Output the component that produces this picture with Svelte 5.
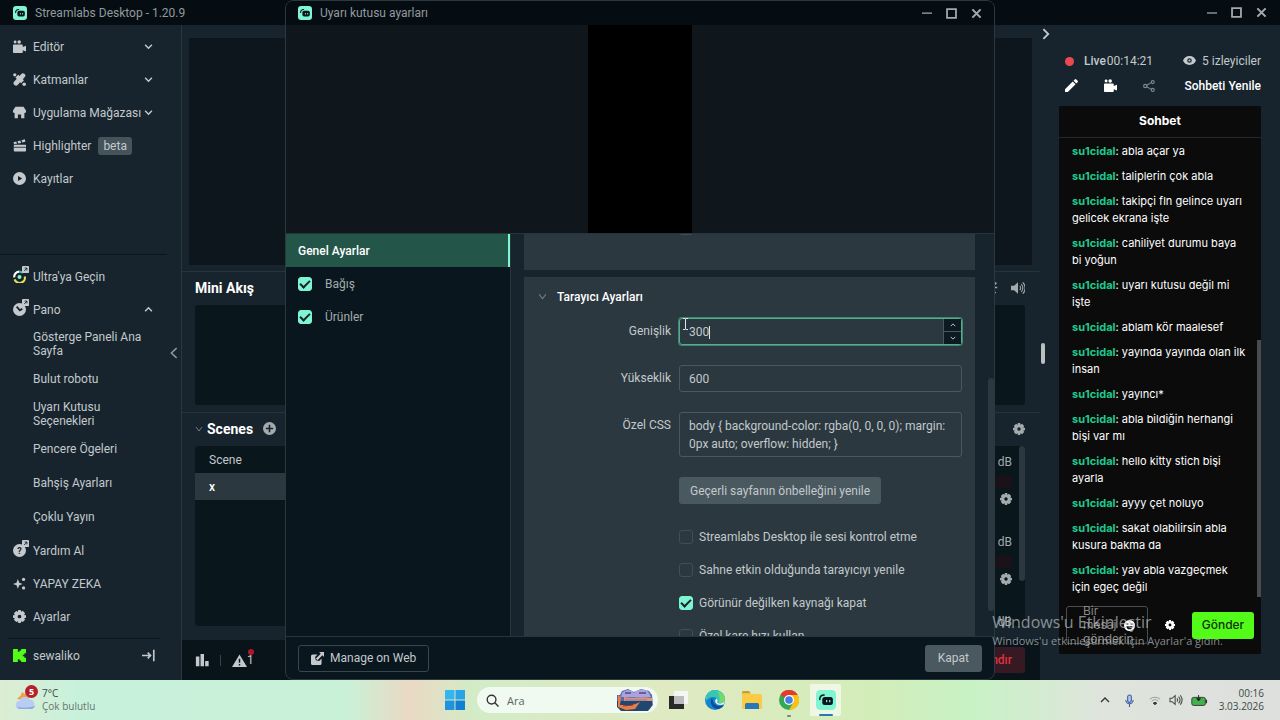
<script>
  const menu = [
    { icon: 'camera', label: 'Editör', arrow: 'down' },
    { icon: 'brush', label: 'Katmanlar', arrow: 'down' },
    { icon: 'store', label: 'Uygulama Mağazası', arrow: 'down' },
    { icon: 'clapper', label: 'Highlighter', badge: 'beta' },
    { icon: 'play', label: 'Kayıtlar' }
  ]

  const panelItems = [
    'Gösterge Paneli Ana Sayfa',
    'Bulut robotu',
    'Uyarı Kutusu Seçenekleri',
    'Pencere Ögeleri',
    'Bahşiş Ayarları',
    'Çoklu Yayın'
  ]

  const scenes = ['Scene', 'x']

  const messages = [
    'abla açar ya',
    'taliplerin çok abla',
    'takipçi fln gelince uyarı gelicek ekrana işte',
    'cahiliyet durumu baya bi yoğun',
    'uyarı kutusu değil mi işte',
    'ablam kör maalesef',
    'yayında yayında olan ilk insan',
    'yayıncı*',
    'abla bildiğin herhangi bişi var mı',
    'hello kitty stich bişi ayarla',
    'ayyy çet noluyo',
    'sakat olabilirsin abla kusura bakma da',
    'yav abla vazgeçmek için egeç değil'
  ]

  let activeScene = 'x'
  let panelOpen = true
  let width = 300
  let height = 600
  let css = 'body { background-color: rgba(0, 0, 0, 0); margin: 0px auto; overflow: hidden; }'
  let alerts = [
    { label: 'Bağış', on: true },
    { label: 'Ürünler', on: true }
  ]
  let options = [
    { label: 'Streamlabs Desktop ile sesi kontrol etme', on: false },
    { label: 'Sahne etkin olduğunda tarayıcıyı yenile', on: false },
    { label: 'Görünür değilken kaynağı kapat', on: true },
    { label: 'Özel kare hızı kullan', on: false }
  ]
</script>

{#snippet icon(name, size = 13)}
  <svg class="icon" viewBox="0 0 16 16" width={size} height={size} fill="currentColor" aria-hidden="true">
    {#if name === 'camera'}
      <circle cx="2.6" cy="2.4" r="1.8" /><circle cx="7.6" cy="2.4" r="2.2" />
      <path d="M1 5.5h10a1 1 0 0 1 1 1v2l4-1.5v7l-4-1.5V15a1 1 0 0 1-1 1H1a1 1 0 0 1-1-1V6.500a1 1 0 0 1 1-1z" />
    {:else if name === 'brush'}
      <path d="M10 1.500a2.500 2.500 0 0 1 4.500 3.500L6 14.500a3 3 0 0 1-4.500-4z" /><path d="m3 5.500 3.500-3.500 7 7-3.500 3.500z" />
      <circle cx="2.200" cy="2.200" r="2" /><circle cx="13.800" cy="13.800" r="2.200" />
    {:else if name === 'store'}
      <path fill-rule="evenodd" d="M3 1h10l3 4.500a2.300 2.300 0 0 1-2 3V15H2V8.500a2.300 2.300 0 0 1-2-3zM6 15h4v-4.500H6z" />
    {:else if name === 'clapper'}
      <path d="M1 7h15v7.500a1 1 0 0 1-1 1H2a1 1 0 0 1-1-1zM.5 4 4 3 5 5.700 1.300 6zM5.500 2.700 9 1.800l1 3-3.500.7zM10.500 1.400 14.500.3l.7 3-3.700 1z" />
      <path d="M1 10.200h15" stroke="#17242d" />
    {:else if name === 'play'}
      <path fill-rule="evenodd" d="M8 0a8 8 0 1 0 0 16A8 8 0 0 0 8 0zM6.200 4.800 11.300 8l-5.100 3.200z" />
    {:else if name === 'ultra'}
      <g fill="none" stroke-width="2.600">
        <path d="M1.500 9A6.500 6.500 0 0 1 8 2" stroke="#fff" /><path d="M2 11.500A6.500 6.500 0 0 0 14.500 8" stroke="#e5e04d" />
        <path d="M8 2a6.500 6.500 0 0 1 4 1.500" stroke="#31c3a2" />
      </g>
      <circle cx="8" cy="8.500" r="2.500" fill="#80f5d2" />
    {:else if name === 'dial'}
      <circle cx="8" cy="8" r="8" /><path d="m4.500 4.500 4 4.500 3-2" fill="none" stroke="#17242d" stroke-width="2.200" />
    {:else if name === 'help'}
      <circle cx="8" cy="8" r="8" /><text x="8" y="12" text-anchor="middle" font-size="11" font-weight="700" fill="#17242d">?</text>
    {:else if name === 'out'}
      <rect width="16" height="16" rx="2" /><path d="M5 11.500 11 5M6 4.700h5.300V10" fill="none" stroke="#17242d" stroke-width="2" />
    {:else if name === 'sparkle'}
      <path d="M6 2.500 7.700 7 12 8.500 7.700 10 6 14.500 4.300 10 0 8.500 4.300 7z" />
      <circle cx="13" cy="3" r="2" /><circle cx="13" cy="13.500" r="2" />
    {:else if name === 'gear'}
      <path fill-rule="evenodd" d="M6.500 0h3l.5 2.200 2-1.200L14.900 4l-1.200 2 2.300.5v3l-2.300.5 1.200 2L12 14.900l-2-1.200-.5 2.300h-3L6 13.700l-2 1.200L1.100 12l1.200-2L0 9.500v-3L2.300 6 1.100 4 4 1.100l2 1.200zM8 5.700a2.300 2.300 0 1 0 0 4.600 2.300 2.300 0 0 0 0-4.600z" />
    {:else if name === 'kick'}
      <path fill="#53fc18" d="M0 0h6v3.500h2V1.700h2V0h6v5.200h-2V7h-2v2h2v1.800h2V16h-6v-1.700H8v-1.800H6V16H0z" />
    {:else if name === 'logout'}
      <path d="M0 8h10M7 4.500 10.500 8 7 11.500M14.500 1v14" fill="none" stroke="currentColor" stroke-width="2" />
    {:else if name === 'down'}
      <path d="m2 5 6 6 6-6" fill="none" stroke="currentColor" stroke-width="2.600" />
    {:else if name === 'thin-down'}
      <path d="m2 4 6 8 6-8" fill="none" stroke="currentColor" stroke-width="1.800" />
    {:else if name === 'up'}
      <path d="m2 11 6-6 6 6" fill="none" stroke="currentColor" stroke-width="2.600" />
    {:else if name === 'left'}
      <path d="M11.500 1.500 4.500 8l7 6.500" fill="none" stroke="currentColor" stroke-width="2" />
    {:else if name === 'right'}
      <path d="m4.500 1.500 6.500 6.500-6.500 6.500" fill="none" stroke="currentColor" stroke-width="2.400" />
    {:else if name === 'plus'}
      <path fill-rule="evenodd" d="M8 0a8 8 0 1 0 0 16A8 8 0 0 0 8 0zM7 3.500h2V7h3.500v2H9v3.500H7V9H3.500V7H7z" />
    {:else if name === 'bars'}
      <path d="M1 4h4v11H1zM6.300 1h4v14h-4zM11.600 9h4v6h-4z" />
    {:else if name === 'warning'}
      <path fill-rule="evenodd" d="M8 1.500 16 15H0zM7.200 6v4.500h1.600V6zm0 5.700v1.600h1.600v-1.600z" />
    {:else if name === 'eye'}
      <path fill-rule="evenodd" d="M8 2.500c4 0 6.800 2.500 8 5.500-1.200 3-4 5.500-8 5.500S1.200 11 0 8c1.200-3 4-5.500 8-5.500zM8 5.200a2.800 2.800 0 1 0 0 5.600 2.800 2.800 0 0 0 0-5.600z" />
      <circle cx="8" cy="8" r="1.300" />
    {:else if name === 'pencil'}
      <path d="M0 16v-3.500L9.500 3 13 6.500 3.500 16zM10.500 2 12 .5a1.500 1.500 0 0 1 2 0L15.500 2a1.500 1.500 0 0 1 0 2L14 5.500z" />
    {:else if name === 'share'}
      <g fill="none" stroke="currentColor" stroke-width="1.500"><path d="m5 7 6-3.500M5 9l6 3.500" /><circle cx="3" cy="8" r="2.200" /><circle cx="13" cy="2.800" r="2" /><circle cx="13" cy="13.200" r="2" /></g>
    {:else if name === 'speaker'}
      <path d="M0 5.500h3.500L8 1.500v13l-4.500-4H0z" />
      <path d="M10 5.500a3.500 3.500 0 0 1 0 5M11.700 3.500a6.300 6.300 0 0 1 0 9M13.400 1.500a9 9 0 0 1 0 13" fill="none" stroke="currentColor" stroke-width="1.200" />
    {:else if name === 'popout'}
      <path d="m9 7 5-5M9 3v5h6M7 9l6 6" fill="none" stroke="currentColor" stroke-width="2" />
    {:else if name === 'cross'}
      <path d="m2 2 12 12M14 2 2 14" fill="none" stroke="currentColor" stroke-width="3" />
    {:else if name === 'min'}
      <path d="M0 8h16" stroke="currentColor" stroke-width="2" />
    {:else if name === 'max'}
      <path d="M1.500 1.500h13v13h-13z" fill="none" stroke="currentColor" stroke-width="2.600" />
    {:else if name === 'external'}
      <path d="M2 3h6L5 6l1 4 4 1 3-3v6a2 2 0 0 1-2 2H2a2 2 0 0 1-2-2V5a2 2 0 0 1 2-2z" />
      <path d="M10 0h6v6l-2-2-6 6-2-2 6-6z" />
    {:else if name === 'smile'}
      <circle cx="8" cy="8" r="8" /><path d="M3.500 9h9a4.500 4.500 0 0 1-9 0zM3.500 5h3v1.500h-3zM9.500 5h3v1.500h-3z" fill="#0b0b0b" />
    {/if}
  </svg>
{/snippet}

{#snippet logo(size)}
  <svg class="icon" viewBox="0 0 16 16" width={size} height={size} aria-hidden="true">
    <rect width="16" height="16" rx="3.500" fill="#80f5d2" />
    <path d="M3 7.500C3 5 4.500 4 6.500 4" fill="none" stroke="#09161d" stroke-width="1.200" stroke-linecap="round" />
    <rect x="5" y="5.500" width="8.500" height="6.500" rx="2" fill="#09161d" />
    <path d="M8.500 8v1.700M11 8v1.700" stroke="#80f5d2" stroke-width="1" />
  </svg>
{/snippet}

{#snippet controls()}
  <div class="controls">
    <button aria-label="Küçült">{@render icon('min', 10)}</button>
    <button aria-label="Büyüt">{@render icon('max', 11)}</button>
    <button aria-label="Pencereyi kapat">{@render icon('cross', 11)}</button>
  </div>
{/snippet}

<div class="screen">
  <div class="app">
    <header class="titlebar">
      {@render logo(14)}
      <span>Streamlabs Desktop - 1.20.9</span>
      {@render controls()}
    </header>

    <div class="workspace">
      <nav class="sidebar">
        <div class="menu top">
          {#each menu as item}
            <button class="item">
              {@render icon(item.icon)}
              <span>{item.label}</span>
              {#if item.badge}<em>{item.badge}</em>{/if}
              {#if item.arrow}<i>{@render icon(item.arrow, 9)}</i>{/if}
            </button>
          {/each}
        </div>
        <div class="menu bottom">
          <button class="item">
            <b class="linked">{@render icon('ultra')}<small>{@render icon('out', 7)}</small></b>
            <span>Ultra'ya Geçin</span>
          </button>
          <button class="item" on:click={() => (panelOpen = !panelOpen)}>
            <b class="linked">{@render icon('dial')}<small>{@render icon('out', 7)}</small></b>
            <span>Pano</span>
            <i>{@render icon(panelOpen ? 'up' : 'down', 9)}</i>
          </button>
          {#if panelOpen}
            {#each panelItems as label}
              <button class="item sub">{label}</button>
            {/each}
          {/if}
          <button class="item">
            <b class="linked">{@render icon('help')}<small>{@render icon('out', 7)}</small></b>
            <span>Yardım Al</span>
          </button>
          <button class="item">{@render icon('sparkle')}<span>YAPAY ZEKA</span></button>
          <button class="item">{@render icon('gear')}<span>Ayarlar</span></button>
        </div>
        <button class="item account">
          {@render icon('kick')}<span>sewaliko</span><i>{@render icon('logout', 13)}</i>
        </button>
      </nav>
      <button class="collapse" aria-label="Menüyü daralt">{@render icon('left', 12)}</button>

      <main class="studio">
        <div class="stage"><div class="canvas"></div></div>

        <section class="feed">
          <header>
            <h2>Mini Akış</h2>
            <div class="tools">{@render icon('popout', 13)}{@render icon('speaker', 14)}</div>
          </header>
          <div class="well"></div>
        </section>

        <div class="columns">
          <section>
            <header>
              <span class="dim">{@render icon('thin-down', 8)}</span>
              <h2>Scenes</h2>
              <button class="add" aria-label="Sahne ekle">{@render icon('plus', 13)}</button>
            </header>
            <div class="well">
              {#each scenes as scene}
                <button class="scene" class:active={scene === activeScene} on:click={() => (activeScene = scene)}>{scene}</button>
              {/each}
            </div>
          </section>
          <section>
            <header><div class="tools">{@render icon('gear', 12)}</div></header>
            <div class="well mixer">
              {#each [1, 2, 3] as n}
                <div class="channel">
                  <span>0.0 dB</span>
                  <div class="meter"></div>
                  {@render icon('gear', 12)}
                </div>
              {/each}
              <div class="mixer-thumb"></div>
            </div>
          </section>
        </div>

        <footer class="status">
          {@render icon('bars', 14)}
          <span class="sep"></span>
          <span class="warn">{@render icon('warning', 15)}1<i></i></span>
          <button class="stop">Yayını Sonlandır</button>
        </footer>
      </main>

      <aside class="live">
        <button class="fold" aria-label="Sohbeti gizle">{@render icon('right', 12)}</button>
        <div class="handle"></div>
        <div class="live-row">
          <span class="rec"></span>
          <span class="time"><b>Live</b> 00:14:21</span>
          <span class="viewers">{@render icon('eye', 13)} 5 izleyiciler</span>
        </div>
        <div class="live-row actions">
          <button aria-label="Düzenle">{@render icon('pencil')}</button>
          <button aria-label="Kamera">{@render icon('camera')}</button>
          <button class="dim" aria-label="Paylaş">{@render icon('share', 12)}</button>
          <button class="refresh">Sohbeti Yenile</button>
        </div>
        <section class="chat">
          <h3>Sohbet</h3>
          <div class="log">
            {#each messages as text}
              <p><b>su1cidal</b>: {text}</p>
            {/each}
            <div class="log-thumb"></div>
          </div>
          <form class="compose" on:submit|preventDefault>
            <div class="box">
              <textarea aria-label="Mesaj" placeholder="Bir mesaj gönderin"></textarea>
              <button type="button" aria-label="Emoji">{@render icon('smile', 11)}</button>
            </div>
            <button type="button" aria-label="Sohbet ayarları">{@render icon('gear', 10)}</button>
            <button class="send">Gönder</button>
          </form>
        </section>
      </aside>
    </div>

    <section class="dialog" role="dialog" aria-label="Uyarı kutusu ayarları">
      <header class="titlebar">
        {@render logo(14)}
        <span>Uyarı kutusu ayarları</span>
        {@render controls()}
      </header>
      <div class="preview"><div></div></div>
      <div class="settings">
        <div class="tabs">
          <button class="tab">Genel Ayarlar</button>
          {#each alerts as alert}
            <label class="alert"><input type="checkbox" bind:checked={alert.on} />{alert.label}</label>
          {/each}
        </div>
        <div class="scroller">
          <div class="card previous"><input type="checkbox" aria-label="Seçenek" /></div>
          <div class="card">
            <h4><span class="dim">{@render icon('thin-down', 9)}</span>Tarayıcı Ayarları</h4>
            <div class="form">
              <label for="width">Genişlik</label>
              <div class="number focused">
                <input id="width" type="number" bind:value={width} />
                <span class="caret"></span>
                <div class="spin">
                  <button aria-label="Artır" on:click={() => (width += 1)}>{@render icon('up', 6)}</button>
                  <button aria-label="Azalt" on:click={() => (width -= 1)}>{@render icon('down', 6)}</button>
                </div>
                <svg class="pointer" viewBox="0 0 7 12" width="7" height="12" fill="none" stroke="#dfe5e7" aria-hidden="true">
                  <path d="M1 .5h2l.5.5.5-.5h2M3.500 1v10M1 11.500h2l.5-.5.5.5h2" />
                </svg>
              </div>
              <label for="height">Yükseklik</label>
              <div class="number"><input id="height" type="number" bind:value={height} /></div>
              <label for="css">Özel CSS</label>
              <textarea id="css" rows="2" bind:value={css}></textarea>
              <button class="soft cache">Geçerli sayfanın önbelleğini yenile</button>
              <div class="options">
                {#each options as option}
                  <label><input type="checkbox" bind:checked={option.on} />{option.label}</label>
                {/each}
              </div>
            </div>
          </div>
          <div class="scroll-thumb"></div>
        </div>
      </div>
      <footer>
        <button class="outline">{@render icon('external', 13)}Manage on Web</button>
        <button class="soft">Kapat</button>
      </footer>
    </section>

    <div class="watermark">
      <strong>Windows'u Etkinleştir</strong>
      <span>Windows'u etkinleştirmek için Ayarlar'a gidin.</span>
    </div>
  </div>

  <div class="taskbar">
    <button class="weather">
      <svg viewBox="0 0 22 22" width="22" height="22" aria-hidden="true">
        <path d="m2 10 4-4 1-3 3 2 5 1-2 6z" fill="#f2a03c" />
        <path d="M5 20a4 4 0 0 1-.5-8 5.500 5.500 0 0 1 10.300-1.200A4.700 4.700 0 0 1 16 20z" fill="#b9cdf3" />
        <path d="M2 17.500c2 1.500 15 1.500 18-1a4.500 4.500 0 0 1-4 3.500H5a4 4 0 0 1-3-2.500z" fill="#8fa9e6" />
      </svg>
      <b>5</b>
      <span>7°C<small>Çok bulutlu</small></span>
    </button>

    <div class="pinned">
      <button class="task" aria-label="Başlat">
        <svg viewBox="0 0 20 20" width="20" height="20"><path d="M0 0h9.500v9.500H0z" fill="#35b5ee" /><path d="M10.500 0H20v9.500h-9.500z" fill="#2aa2e6" /><path d="M0 10.500h9.500V20H0z" fill="#1f93dd" /><path d="M10.500 10.500H20V20h-9.500z" fill="#1180d3" /></svg>
      </button>
      <label class="search">
        <svg viewBox="0 0 14 14" width="13" height="13" fill="none" stroke="#333" stroke-width="1.500"><circle cx="6" cy="6" r="4.700" /><path d="m9.500 9.500 4 4" /></svg>
        <input type="text" placeholder="Ara" aria-label="Ara" />
        <svg viewBox="0 0 38 22" width="38" height="22">
          <path d="M1 6h3l2-4 6-2 6 3 7-3 8 2 3 4 1 10-4 5H5l-4-4z" fill="#5a6aa8" />
          <path d="M6 4c4-5 10-3 12 0 4-4 11-5 15 0l2 4H5z" fill="#a8a4e0" />
          <path d="M8 8c7 2 18-1 28 1v3H8z" fill="#e58f7d" /><path d="M9 4h6M23 4h7" stroke="#544a84" stroke-width="1.500" />
          <path d="M1 12h35v4l-4 6H5l-4-4z" fill="#22476f" /><path d="M9 11h22" stroke="#6d86c0" />
          <path d="m2 6 3 2-1 8h4c5 1 10 0 16-3l-5 7-9 1-8-3z" fill="#ee7b43" /><path d="m7 17 10-1" stroke="#733d47" />
        </svg>
      </label>
      <button class="task" aria-label="Görev görünümü">
        <svg viewBox="0 0 20 20" width="20" height="20"><path d="M1 6h15v13H1z" fill="#292929" /><path d="M6 1h14v13H6z" fill="#f5f5f3" /><path d="M6 6h10v8H6z" fill="#bcbcbc" /></svg>
      </button>
      <button class="task" aria-label="Edge">
        <svg viewBox="0 0 20 20" width="20" height="20"><circle cx="10" cy="10" r="10" fill="#1683d0" /><path d="M1 7C3 1 8-1 13 .5c5 1.500 7 5 7 8.500 0 4-5 5-8 3.500 2-2 0-5.500-4-5.500-3 0-5 1.500-7 4z" fill="#37c6b5" /><path d="M12 1c5 1 8 4.500 8 8 0 3-3 4.500-6 4 1-3 1-8-2-12z" fill="#73d96b" /><path d="M7 8c-3 4 0 11 6 11 3-.5 5-2 6-4-4 2-10 1-11-4z" fill="#0b4c9b" /><path d="M12 12.500c2 1.500 6 1.500 8-2l-1.500 4c-3 1-7 .5-8-2-1-2 0-3 1-4 1.500 1 1.500 3 .5 4z" fill="#eaf7e6" /></svg>
      </button>
      <button class="task" aria-label="Dosya Gezgini">
        <svg viewBox="0 0 20 20" width="20" height="20"><path d="M0 2.500A1.500 1.500 0 0 1 1.500 1H7l2 2.500H0z" fill="#d69a20" /><path d="M0 4h18.500A1.500 1.500 0 0 1 20 5.500v12a1.500 1.500 0 0 1-1.500 1.500h-17A1.500 1.500 0 0 1 0 17.500z" fill="#fbcb45" /><path d="M3 19v-4.500A1.500 1.500 0 0 1 4.500 13h11a1.500 1.500 0 0 1 1.500 1.500V19z" fill="#2878b8" /></svg>
      </button>
      <button class="task running" aria-label="Chrome">
        <svg viewBox="0 0 20 20" width="20" height="20"><circle cx="10" cy="10" r="10" fill="#34a853" /><path d="M10 10 1.300 5A10 10 0 0 1 18.700 5z" fill="#e33b2e" /><path d="M10 5h8.700A10 10 0 0 1 10 20l4.300-7.500z" fill="#fbc116" /><circle cx="10" cy="10" r="5" fill="#fff" /><circle cx="10" cy="10" r="3.800" fill="#3f7fe8" /></svg>
      </button>
      <button class="task current" aria-label="Streamlabs Desktop">{@render logo(20)}</button>
    </div>

    <div class="tray">
      <svg viewBox="0 0 10 10" width="10" height="10" fill="none" stroke="#333" stroke-width="1.300"><path d="m1 7 4-4 4 4" /></svg>
      <svg viewBox="0 0 12 14" width="11" height="13" fill="none" stroke="#3d5f9e" stroke-width="1.200"><rect x="4" y="1" width="4" height="8" rx="2" fill="#b5c8ee" /><path d="M2 6.500a4 4 0 0 0 8 0M6 11v3" /></svg>
      <svg viewBox="0 0 14 12" width="12" height="11" fill="none" stroke="#999" stroke-width="1.100"><path d="M1 4.500a9 9 0 0 1 12 0M3 6.800a6 6 0 0 1 8 0" /><path d="M5 9a3 3 0 0 1 4 0l-2 2z" fill="#333" stroke="#333" /></svg>
      <svg viewBox="0 0 16 14" width="14" height="12" fill="none" stroke="#444" stroke-width="1.200"><path d="M1 5h2.500L7 2v10L3.500 9H1zM9 5a3 3 0 0 1 0 4M11 3a6 6 0 0 1 0 8M13 1.500a9 9 0 0 1 0 11" /></svg>
      <svg viewBox="0 0 18 12" width="17" height="11"><rect x=".6" y="2.600" width="14.800" height="8.800" rx="2" fill="#3fb24c" stroke="#333" /><path d="M16.500 5v4" stroke="#333" stroke-width="1.500" /><path d="M8 0v4M6 4h4L8 6.500z" fill="#222" stroke="#222" /></svg>
      <time>00:16<br />3.03.2026</time>
    </div>
  </div>
</div>

<style>
  :global(body) {
    background: #17242d;
  }

  .screen {
    display: flex;
    flex-direction: column;
    min-height: 100vh;
    font: 12px/16px Roboto, "Liberation Sans", sans-serif;
    color: #c3c9cc;
  }

  .screen :global(*) {
    box-sizing: border-box;
  }

  button {
    padding: 0;
    border: 0;
    background: none;
    color: inherit;
    font: inherit;
    cursor: pointer;
  }

  .icon {
    display: block;
    flex: none;
  }

  h2, h3, h4, p {
    margin: 0;
  }

  .dim {
    color: #7d888d;
  }

  .app {
    position: relative;
    flex: 1;
    display: flex;
    flex-direction: column;
  }

  .titlebar {
    display: flex;
    align-items: center;
    gap: 8px;
    height: 25px;
    padding: 0 6px 0 13px;
    background: #050d12;
    color: #929a9e;
  }

  .controls {
    display: flex;
    margin-left: auto;
    color: #a3a9ac;
  }

  .controls button {
    display: grid;
    place-items: center;
    width: 25px;
    height: 23px;
  }

  .workspace {
    flex: 1;
    display: flex;
    background: #17242d;
  }

  /* sidebar */
  .sidebar {
    display: flex;
    flex-direction: column;
    width: 167px;
    padding-bottom: 8px;
  }

  .menu {
    display: flex;
    flex-direction: column;
  }

  .top {
    flex: 1;
    padding-top: 5px;
  }

  .bottom {
    padding: 5px 0;
    border-top: 1px solid #0b151b;
  }

  .item {
    display: flex;
    align-items: center;
    gap: 3px;
    min-height: 33px;
    padding: 0 14px 0 13px;
    text-align: left;
    white-space: nowrap;
  }

  .item span {
    padding-left: 4px;
  }

  .item i {
    margin-left: auto;
  }

  .item em {
    margin-left: 4px;
    padding: 1px 5px;
    border-radius: 3px;
    background: #45535a;
    font-style: normal;
  }

  .sub {
    min-height: 34px;
    padding: 4px 20px 4px 33px;
    line-height: 14px;
    white-space: normal;
  }

  .linked {
    position: relative;
  }

  .linked small {
    position: absolute;
    top: -4px;
    right: -3px;
  }

  .account {
    min-height: 34px;
    margin: 0 7px 0 8px;
    padding: 0 5px;
    border-top: 1px solid #0b151b;
  }

  .collapse {
    display: grid;
    place-items: center;
    width: 15px;
    border-right: 1px solid #2a373e;
    color: #8f999d;
  }

  /* studio */
  .studio {
    flex: 1;
    display: flex;
    flex-direction: column;
  }

  .stage {
    flex: 1;
    display: flex;
    padding: 13px 8px 6px 7px;
  }

  .canvas {
    flex: 1;
    background: #0d161c;
  }

  .feed, .columns {
    border-top: 1px solid #27343b;
  }

  .feed {
    padding: 0 15px 7px 13px;
  }

  .feed .well {
    height: 100px;
  }

  .studio section header {
    display: flex;
    align-items: center;
    height: 33px;
    gap: 4px;
    padding-bottom: 2px;
  }

  h2 {
    color: #fff;
    font-size: 14px;
    font-weight: 700;
  }

  .tools {
    display: flex;
    gap: 13px;
    margin-left: auto;
    color: #a3abae;
  }

  .add {
    margin-left: 6px;
    color: #a3abae;
  }

  .columns {
    display: grid;
    grid-template-columns: 1fr 1fr;
    gap: 16px;
    padding: 0 15px 14px 13px;
  }

  .well {
    border-radius: 3px;
    background: #09161c;
  }

  .columns .well {
    height: 180px;
    overflow: hidden;
  }

  .scene {
    display: block;
    width: 100%;
    height: 27px;
    padding-left: 14px;
    text-align: left;
  }

  .scene.active {
    background: #2b383f;
    color: #fff;
    font-weight: 500;
  }

  .mixer {
    position: relative;
    display: flex;
    flex-direction: column;
    padding-right: 13px;
  }

  .channel {
    display: flex;
    flex-direction: column;
    align-items: flex-end;
    flex: none;
    height: 80px;
    padding-top: 8px;
    color: #a3abae;
  }

  .meter {
    width: 100%;
    height: 12px;
    margin: 6px 0 5px;
    background: #1b1119;
  }

  .mixer-thumb {
    position: absolute;
    top: 0;
    right: 0;
    width: 6px;
    height: 75%;
    border-radius: 3px;
    background: #2b383f;
  }

  .status {
    display: flex;
    align-items: center;
    gap: 11px;
    height: 40px;
    padding: 0 15px 0 13px;
    background: #09131a;
  }

  .sep {
    width: 1px;
    height: 11px;
    background: #35424a;
  }

  .warn {
    position: relative;
    display: flex;
    align-items: center;
  }

  .warn i {
    position: absolute;
    top: -3px;
    right: 0;
    width: 6px;
    height: 6px;
    border-radius: 50%;
    background: #b3142f;
  }

  .stop {
    height: 26px;
    margin-left: auto;
    padding: 0 13px;
    border-radius: 3px;
    background: #361922;
    color: #e0313c;
    font-weight: 500;
  }

  /* live dock */
  .live {
    position: relative;
    display: flex;
    flex-direction: column;
    width: 240px;
    padding: 24px 19px 26px;
  }

  .fold {
    position: absolute;
    top: 3px;
    left: 0;
    color: #c5cbcd;
  }

  .handle {
    position: absolute;
    top: 50%;
    left: 1px;
    width: 4px;
    height: 21px;
    margin-top: -10px;
    border-radius: 2px;
    background: #b9c0c2;
  }

  .live-row {
    display: flex;
    align-items: center;
    height: 24px;
    padding-left: 6px;
  }

  .rec {
    width: 9px;
    height: 9px;
    margin-right: 10px;
    border-radius: 50%;
    background: #ea4a4f;
  }

  .time b {
    font-weight: 500;
    margin-right: -2px;
  }

  .viewers {
    display: flex;
    gap: 6px;
    margin-left: auto;
  }

  .viewers :global(svg) {
    margin-top: 1px;
  }

  .actions {
    height: 25px;
    gap: 26px;
    margin-bottom: 8px;
    color: #fff;
  }

  .refresh {
    margin-left: auto;
    font-weight: 500;
  }

  .chat {
    flex: 1;
    display: flex;
    flex-direction: column;
    background: #0b0b0b;
    color: #fff;
    font-family: Inter, "Liberation Sans", sans-serif;
  }

  h3 {
    padding: 7px 0 8px;
    border-bottom: 1px solid #24282b;
    text-align: center;
    font-size: 12px;
    font-weight: 700;
  }

  .log {
    position: relative;
    flex: 1;
    padding: 5px 14px 0 13px;
    font-size: 11px;
    line-height: 17px;
  }

  .log p + p {
    margin-top: 8px;
  }

  .log b {
    color: #1fc98e;
    font-weight: 700;
  }

  .log-thumb {
    position: absolute;
    right: 0;
    bottom: 0;
    width: 4px;
    height: 56%;
    background: #4b4b4b;
  }

  .compose {
    display: flex;
    align-items: center;
    justify-content: space-between;
    padding: 9px 7px 10px;
  }

  .box {
    display: flex;
    align-items: center;
    width: 82px;
    height: 38px;
    border: 1px solid #4a4e50;
    border-radius: 3px;
  }

  .box textarea {
    flex: none;
    width: 68px;
    height: 42px;
    padding: 0 0 0 16px;
    border: 0;
    background: none;
    color: #fff;
    font: 12px/14px Inter, sans-serif;
    resize: none;
    overflow: hidden;
  }

  .box textarea::placeholder {
    color: #888;
  }

  .box button {
    margin-left: -11px;
  }

  .send {
    width: 62px;
    height: 27px;
    border-radius: 3px;
    background: #53fc18;
    color: #10330a;
    font-weight: 500;
  }

  /* alert box window */
  .dialog {
    position: absolute;
    inset: 0 285px;
    display: flex;
    flex-direction: column;
    overflow: hidden;
    border: 1px solid #2b383e;
    border-radius: 8px;
    background: #09161d;
  }

  .dialog .titlebar {
    height: 24px;
    padding-left: 12px;
    padding-right: 5px;
  }

  .preview {
    display: flex;
    justify-content: center;
    height: 209px;
    border-bottom: 1px solid #27343b;
    background: #0f171d;
  }

  .preview div {
    width: 104px;
    background: #000;
  }

  .settings {
    flex: 1 1 0;
    display: flex;
    min-height: 0;
  }

  .tabs {
    width: 225px;
    border-right: 1px solid #27343b;
  }

  .tab {
    width: 100%;
    height: 33px;
    padding-left: 12px;
    border-right: 2px solid #80f5d2;
    background: #245549;
    color: #fff;
    text-align: left;
    font-weight: 500;
  }

  .alert {
    display: flex;
    align-items: center;
    gap: 13px;
    height: 33px;
    padding-left: 12px;
    color: #a3abae;
  }

  input[type='checkbox'] {
    appearance: none;
    flex: none;
    display: grid;
    place-items: center;
    width: 14px;
    height: 14px;
    margin: 0;
    border: 1px solid #414e55;
    border-radius: 3px;
  }

  input[type='checkbox']:checked {
    border-color: #80f5d2;
    background: #80f5d2;
  }

  input[type='checkbox']:checked::before {
    content: '';
    width: 8px;
    height: 4px;
    margin-bottom: 2px;
    border: solid #17242d;
    border-width: 0 0 2px 2px;
    transform: rotate(-45deg);
  }

  .scroller {
    position: relative;
    flex: 1;
    padding: 0 19px 0 13px;
    overflow: hidden;
    background: #17242d;
  }

  .card {
    padding-right: 13px;
    background: #2b383f;
  }

  .previous {
    display: flex;
    align-items: flex-start;
    height: 36px;
    margin-bottom: 7px;
    padding-left: 155px;
  }

  .previous input {
    margin-top: -13px;
  }

  h4 {
    display: flex;
    align-items: center;
    gap: 10px;
    height: 41px;
    padding: 0 0 2px 14px;
    color: #fff;
    font-size: 12px;
    font-weight: 500;
  }

  .form {
    display: grid;
    grid-template-columns: 147px 1fr;
    gap: 20px 8px;
  }

  .form > label {
    line-height: 27px;
    text-align: right;
  }

  .number {
    position: relative;
    display: flex;
    height: 27px;
    border: 1px solid #4b585e;
    border-radius: 3px;
  }

  .number input {
    flex: 1;
    min-width: 0;
    padding: 0 9px;
    border: 0;
    outline: 0;
    background: none;
    color: inherit;
    font: inherit;
    appearance: textfield;
  }

  .focused {
    border-color: #58ac8d;
    box-shadow: 0 0 0 1px #3a8a6e;
  }

  .caret {
    position: absolute;
    top: 7px;
    left: 29px;
    width: 1px;
    height: 13px;
    background: #dfe5e7;
  }

  .pointer {
    position: absolute;
    top: -1px;
    left: 2px;
  }

  .spin {
    display: grid;
    width: 18px;
    border-left: 1px solid #4b585e;
    background: #0d1a21;
  }

  .spin button {
    display: grid;
    place-items: center;
  }

  .spin button + button {
    border-top: 1px solid #4b585e;
  }

  #css {
    height: 45px;
    padding: 4px 9px;
    border: 1px solid #4b585e;
    border-radius: 3px;
    outline: 0;
    background: none;
    color: inherit;
    font: 12px/18px Roboto, sans-serif;
    resize: none;
    overflow: hidden;
  }

  .soft {
    height: 27px;
    padding: 0 13px;
    border-radius: 3px;
    background: #4a585f;
  }

  .cache, .options {
    grid-column: 2;
    justify-self: start;
  }

  .cache {
    padding: 0 11px;
  }

  .options label {
    display: flex;
    align-items: center;
    gap: 6px;
    height: 33px;
  }

  .options {
    margin-top: -4px;
  }

  .scroll-thumb {
    position: absolute;
    right: 0;
    bottom: 25px;
    width: 6px;
    height: 58%;
    border-radius: 3px;
    background: #2b383f;
  }

  .dialog footer {
    display: flex;
    align-items: center;
    justify-content: space-between;
    height: 43px;
    padding: 0 12px;
    border-top: 1px solid #27343b;
  }

  .outline {
    display: flex;
    align-items: center;
    gap: 6px;
    height: 27px;
    padding: 0 12px;
    border: 1px solid #38464d;
    border-radius: 3px;
  }

  .watermark {
    position: absolute;
    right: 57px;
    bottom: 31px;
    display: grid;
    color: rgba(190, 195, 197, 0.7);
    font-family: "Open Sans", sans-serif;
    font-size: 11px;
    pointer-events: none;
  }

  .watermark strong {
    font-size: 16px;
    font-weight: 400;
    line-height: 22px;
  }

  /* taskbar */
  .taskbar {
    display: grid;
    grid-template-columns: 1fr auto 1fr;
    align-items: center;
    height: 40px;
    background: linear-gradient(90deg, #dcedd3, #c8f1dc 6%, #c9f1d8 27%, #ead9c4 32%, #d3ebc7 37%, #dfeac2 52%, #d3edb9 68%, #c8f2c5 76%, #dfe4dc 86%, #dddfdd);
    color: #3b4a45;
    font: 10px/13px "Open Sans", sans-serif;
  }

  .weather {
    position: relative;
    display: flex;
    align-items: center;
    gap: 5px;
    padding-left: 15px;
    text-align: left;
  }

  .weather b {
    position: absolute;
    top: -2px;
    left: 25px;
    width: 13px;
    border-radius: 50%;
    background: #b5202a;
    color: #fff;
    text-align: center;
    font-size: 9px;
  }

  .weather small {
    display: block;
    color: #65756f;
    font-size: inherit;
  }

  .pinned {
    display: flex;
    align-items: center;
  }

  .task {
    position: relative;
    display: grid;
    place-items: center;
    width: 37px;
    height: 34px;
  }

  .search {
    display: flex;
    align-items: center;
    gap: 8px;
    width: 181px;
    height: 26px;
    margin: 0 1px 0 4px;
    padding: 0 4px 0 9px;
    border-radius: 13px;
    background: #f1faf1;
  }

  .search input {
    flex: 1;
    min-width: 0;
    padding: 0;
    border: 0;
    outline: 0;
    background: none;
    font: 11px "Open Sans", sans-serif;
  }

  .search input::placeholder {
    color: #5b6661;
  }

  .current {
    border-radius: 4px;
    background: rgba(255, 255, 255, 0.6);
    background-clip: padding-box;
    border: solid transparent;
    border-width: 1px 3px;
  }

  .running::after, .current::after {
    content: '';
    position: absolute;
    bottom: 0;
    left: 50%;
    width: 4px;
    height: 2px;
    margin-left: -2px;
    border-radius: 1px;
    background: #7b857c;
  }

  .current::after {
    width: 14px;
    margin-left: -7px;
    background: #2878b8;
  }

  .tray {
    display: flex;
    align-items: center;
    justify-content: flex-end;
    gap: 8px;
    padding-right: 16px;
  }

  .tray svg:nth-child(-n + 2) {
    margin-right: 6px;
  }

  .tray time {
    margin-left: 3px;
    text-align: right;
  }
</style>
